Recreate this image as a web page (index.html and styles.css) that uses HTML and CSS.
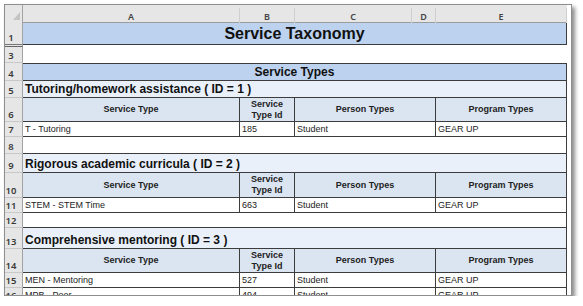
FILE: index.html
```html
<!DOCTYPE html>
<html>
<head>
<meta charset="utf-8">
<link rel="stylesheet" href="styles.css">
</head>
<body>
<div class="frame">
  <div class="sheet">
    <div class="row colhead">
      <div class="rh corner"><span class="tri"></span></div>
      <div class="ch">A</div>
      <div class="ch">B</div>
      <div class="ch">C</div>
      <div class="ch">D</div>
      <div class="ch">E</div>
    </div>

    <div class="row h22">
      <div class="rh">1</div>
      <div class="cell all title">Service Taxonomy</div>
    </div>
    <div class="row h2 hidden-row">
      <div class="rh"></div>
    </div>
    <div class="row h16">
      <div class="rh">3</div>
    </div>
    <div class="row h18">
      <div class="rh">4</div>
      <div class="cell all band topline">Service Types</div>
    </div>

    <div class="row h17">
      <div class="rh">5</div>
      <div class="cell all section">Tutoring/homework assistance ( ID = 1 )</div>
    </div>
    <div class="row h24">
      <div class="rh">6</div>
      <div class="cell th">Service Type</div>
      <div class="cell th">Service<br>Type Id</div>
      <div class="cell th cd">Person Types</div>
      <div class="cell th">Program Types</div>
    </div>
    <div class="row h15">
      <div class="rh">7</div>
      <div class="cell td">T - Tutoring</div>
      <div class="cell td">185</div>
      <div class="cell td cd">Student</div>
      <div class="cell td">GEAR UP</div>
    </div>
    <div class="row h17">
      <div class="rh">8</div>
      <div class="cell all blank"></div>
    </div>

    <div class="row h19">
      <div class="rh">9</div>
      <div class="cell all section">Rigorous academic curricula ( ID = 2 )</div>
    </div>
    <div class="row h25">
      <div class="rh">10</div>
      <div class="cell th">Service Type</div>
      <div class="cell th">Service<br>Type Id</div>
      <div class="cell th cd">Person Types</div>
      <div class="cell th">Program Types</div>
    </div>
    <div class="row h15">
      <div class="rh">11</div>
      <div class="cell td">STEM - STEM Time</div>
      <div class="cell td">663</div>
      <div class="cell td cd">Student</div>
      <div class="cell td">GEAR UP</div>
    </div>
    <div class="row h15">
      <div class="rh">12</div>
      <div class="cell all blank"></div>
    </div>

    <div class="row h21">
      <div class="rh">13</div>
      <div class="cell all section">Comprehensive mentoring ( ID = 3 )</div>
    </div>
    <div class="row h24">
      <div class="rh">14</div>
      <div class="cell th">Service Type</div>
      <div class="cell th">Service<br>Type Id</div>
      <div class="cell th cd">Person Types</div>
      <div class="cell th">Program Types</div>
    </div>
    <div class="row h15">
      <div class="rh">15</div>
      <div class="cell td">MEN - Mentoring</div>
      <div class="cell td">527</div>
      <div class="cell td cd">Student</div>
      <div class="cell td">GEAR UP</div>
    </div>
    <div class="row h15">
      <div class="rh">16</div>
      <div class="cell td">MPB - Peer</div>
      <div class="cell td">494</div>
      <div class="cell td cd">Student</div>
      <div class="cell td">GEAR UP</div>
    </div>
  </div>
</div>
</body>
</html>
```

FILE: styles.css
```css
* { box-sizing: border-box; }
html, body { margin: 0; padding: 0; background: #ffffff; }
body { padding: 4px 0 0 4px; }

.frame {
  width: 568px;
  height: 292px;
  border: 1px solid #8e8e8e;
  background: #ffffff;
  box-shadow: 3px 3px 4px rgba(0, 0, 0, 0.45);
  overflow: hidden;
}

.sheet { width: 562px; }

.row {
  display: grid;
  grid-template-columns: 18px 217px 55px 117px 24px 131px;
}

.h2 { height: 2px; }
.h15 { height: 15px; }
.h16 { height: 16px; }
.h17 { height: 17px; }
.h18 { height: 18px; }
.h19 { height: 19px; }
.h21 { height: 21px; }
.h22 { height: 22px; }
.h24 { height: 24px; }
.h25 { height: 25px; }

.colhead {
  height: 18px;
  background: #e6e6e6;
  border-bottom: 1px solid #9c9c9c;
}

.ch {
  font-family: "Noto Sans", sans-serif;
  font-size: 9px;
  font-weight: 600;
  color: #444444;
  display: flex;
  align-items: center;
  justify-content: center;
  padding-top: 2px;
  border-right: 1px solid #cfcfcf;
  margin: 3px 0 0 0;
}

.rh {
  grid-column: 1;
  background: #e6e6e6;
  border-right: 1px solid #a3a3a3;
  border-bottom: 1px solid #c8c8c8;
  font-family: "Noto Sans", sans-serif;
  font-size: 9.5px;
  font-weight: 600;
  color: #3a3a3a;
  display: flex;
  align-items: flex-end;
  justify-content: center;
  padding-right: 5px;
  line-height: 11px;
  padding-bottom: 1px;
}

.corner {
  position: relative;
  border-bottom: none;
  background: #e6e6e6;
}
.tri {
  position: absolute;
  right: 2px;
  bottom: 3px;
  width: 0;
  height: 0;
  border-left: 7px solid transparent;
  border-bottom: 8px solid #c4c4c4;
}

.hidden-row .rh {
  border-bottom: 1px solid #666666;
  padding: 0;
}
.h22 .rh { border-bottom: 1px solid #777777; }

.cell {
  font-family: "Liberation Sans", Arial, sans-serif;
  color: #111111;
  border-right: 1px solid #3c3c3c;
  border-bottom: 1px solid #3c3c3c;
  overflow: hidden;
  white-space: nowrap;
}

.all { grid-column: 2 / 7; }
.cd { grid-column: 4 / 6; }

.title {
  background: #bcd2ee;
  font-size: 16px;
  font-weight: bold;
  display: flex;
  align-items: center;
  justify-content: center;
  padding-top: 1px;
}

.band {
  background: #bcd2ee;
  font-size: 12px;
  font-weight: bold;
  display: flex;
  align-items: center;
  justify-content: center;
}
.topline { border-top: 1px solid #3c3c3c; }

.section {
  background: #e9f0fa;
  font-size: 12px;
  font-weight: bold;
  display: flex;
  align-items: flex-end;
  padding: 0 0 1px 2px;
  line-height: 14px;
}

.th {
  background: #dbe5f2;
  font-size: 9px;
  font-weight: bold;
  display: flex;
  align-items: center;
  justify-content: center;
  text-align: center;
  line-height: 11px;
  color: #222222;
}

.td {
  font-size: 9px;
  display: flex;
  align-items: flex-end;
  padding: 0 0 1px 2px;
  line-height: 11px;
  color: #222222;
}

.blank { background: #ffffff; }
```
